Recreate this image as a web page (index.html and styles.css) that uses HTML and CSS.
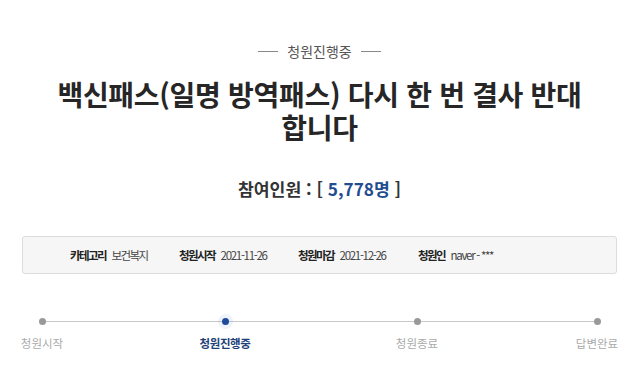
FILE: index.html
```html
<!DOCTYPE html>
<html lang="ko">
<head>
  <meta charset="UTF-8" />
  <meta name="viewport" content="width=device-width, initial-scale=1.0" />
  <title>청원진행중</title>
  <link rel="stylesheet" href="styles.css">
</head>
<body>

  <div class="petition">
    <p class="status">청원진행중</p>

    <h1 class="title">백신패스(일명 방역패스) 다시 한 번 결사 반대<br />합니다</h1>

    <p class="count">참여인원 : [ <span class="num">5,778명</span> ]</p>

    <ul class="info">
      <li><b>카테고리</b> 보건복지</li>
      <li><b>청원시작</b> <span class="date">2021-11-26</span></li>
      <li><b>청원마감</b> <span class="date">2021-12-26</span></li>
      <li><b>청원인</b> <span class="date">naver - ***</span></li>
    </ul>

    <ol class="steps">
      <li class="step">청원시작</li>
      <li class="step on">청원진행중</li>
      <li class="step">청원종료</li>
      <li class="step">답변완료</li>
    </ol>
  </div>

</body>
</html>
```

FILE: styles.css
```css
body {
  margin: 0;
  background: #fff;
  color: #333;
  font-family: "Noto Sans CJK KR", "Noto Sans", sans-serif;
}

.petition {
  padding: 40px 23px 0 22px;
}

.status {
  display: flex;
  align-items: center;
  justify-content: center;
  gap: 9px;
  margin: 0;
  font-size: 14px;
  line-height: 22px;
  color: #555;
}

.status::before,
.status::after {
  content: "";
  width: 20px;
  height: 1px;
  background: #888;
}

.title {
  margin: 16px 0 0;
  font-size: 28px;
  line-height: 33px;
  font-weight: 700;
  color: #262626;
  text-align: center;
  letter-spacing: -0.3px;
}

.count {
  margin: 33px 0 0;
  font-size: 17.2px;
  line-height: 24px;
  font-weight: 700;
  color: #333;
  text-align: center;
}

.count .num {
  color: #1f4d91;
}

.info {
  display: flex;
  list-style: none;
  margin: 35px 0 0;
  padding: 0 0 0 47px;
  height: 36px;
  align-items: center;
  background: #f6f6f6;
  border: 1px solid #dcdcdc;
  border-radius: 3px;
  font-size: 11.5px;
  color: #444;
  letter-spacing: -1.6px;
}

.info li {
  white-space: nowrap;
}

.info li:nth-child(1) { width: 109px; }
.info li:nth-child(2) { width: 119px; }
.info li:nth-child(3) { width: 120px; }

.info b {
  color: #222;
  margin-right: 4px;
}

.date {
  letter-spacing: -1.3px;
}

.steps {
  position: relative;
  display: grid;
  grid-template-columns: 40px 138px 50px 147px 40px 1fr 40px;
  list-style: none;
  margin: 43px 0 0;
  padding: 0;
}

.steps::before {
  content: "";
  position: absolute;
  left: 20px;
  right: 20px;
  top: 4px;
  height: 1px;
  background: #c8c8c8;
}

.step {
  position: relative;
  display: flex;
  flex-direction: column;
  align-items: center;
  white-space: nowrap;
  font-size: 11.5px;
  line-height: 16px;
  color: #aaa;
}

.step:nth-child(1) { grid-column: 1; }
.step:nth-child(2) { grid-column: 3; }
.step:nth-child(3) { grid-column: 5; }
.step:nth-child(4) { grid-column: 7; }

.step::before {
  content: "";
  width: 7px;
  height: 7px;
  border-radius: 50%;
  background: #999;
  margin: 1px 0 10px;
}

.step.on {
  color: #1e3f78;
  font-weight: 700;
  letter-spacing: -0.4px;
}

.step.on::before {
  background: #1d4a9a;
  box-shadow: 0 0 0 4px rgba(40, 100, 200, 0.08);
}
```
